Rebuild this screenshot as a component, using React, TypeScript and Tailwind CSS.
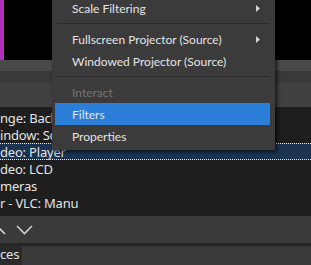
const rows = [
  { label: 'nge: Background' },
  { label: 'indow: Screen' },
  { label: 'deo: Player', selected: true },
  { label: 'deo: LCD' },
  { label: 'meras' },
  { label: 'r - VLC: Manu' },
]

function Arrow() {
  return (
    <svg width="4" height="7" viewBox="0 0 4 7" className="ml-auto">
      <path d="M0 0 L4 3.5 L0 7 Z" fill="#d4d4d4" />
    </svg>
  )
}

function Chevron({ up }: { up?: boolean }) {
  return (
    <svg width="17" height="10" viewBox="0 0 17 10" className="shrink-0">
      <polyline
        points={up ? '1,9 8.5,1.5 16,9' : '1,1 8.5,8.5 16,1'}
        fill="none"
        stroke="#cfcfcf"
        strokeWidth="1.6"
      />
    </svg>
  )
}

function Item({ label, arrow, disabled, active }: { label: string; arrow?: boolean; disabled?: boolean; active?: boolean }) {
  return (
    <div
      className={`flex items-center h-[22px] ml-[3px] mr-[5px] pl-[17px] pr-[10px] pt-px ${
        active ? 'bg-[#2b7fd9]' : ''
      } ${disabled ? 'text-[#747474]' : 'text-[#e4e4e4]'}`}
    >
      <span>{label}</span>
      {arrow && <Arrow />}
    </div>
  )
}

function Separator() {
  return (
    <div className="h-[9px] flex items-center px-[5px]">
      <div className="h-px w-full bg-[#2a2a2a]" />
    </div>
  )
}

export default function App() {
  return (
    <div className="relative w-[311px] h-[265px] overflow-hidden bg-[#1e1e1e] font-['Noto_Sans',sans-serif]">
      {/* preview */}
      <div className="flex h-[60px] bg-black">
        <div className="w-[4px] bg-[#b22fbd]" />
      </div>
      <div className="h-[11px] bg-[#4a4a4a]" />
      <div className="h-[12px] bg-[#393939]" />
      <div className="h-[24px] bg-[#414141]" />

      {/* sources list */}
      <div className="h-[109px] overflow-hidden pt-[2px] text-[13px] tracking-[-0.2px] text-[#e2e2e2]">
        {rows.map(r => (
          <div
            key={r.label}
            className={`h-[17px] leading-[17px] whitespace-nowrap border-y ${
              r.selected ? 'bg-[#1b3452] border-dotted border-[#e8e8e8]' : 'border-transparent'
            }`}
          >
            {r.label}
          </div>
        ))}
      </div>

      {/* toolbar */}
      <div className="flex items-center h-[27px] bg-[#3a3a3a] -ml-[11px] gap-[10px] pt-px">
        <Chevron up />
        <Chevron />
      </div>
      <div className="h-[3px] bg-[#262626]" />
      <div className="flex h-[19px] bg-[#3a3a3a]">
        <div className="w-[22px] bg-[#2a2a2a] rounded-tr-[3px] text-[13px] tracking-[-0.2px] text-[#e2e2e2] leading-[17px] overflow-hidden whitespace-nowrap">
          ces
        </div>
      </div>

      {/* context menu */}
      <div className="absolute left-[52px] top-[-3px] w-[223px] bg-[#3b3b3b] pb-[3px] font-['Lato',sans-serif] text-[12px] shadow-[2px_2px_4px_rgba(0,0,0,0.7)]">
        <Item label="Scale Filtering" arrow />
        <Separator />
        <Item label="Fullscreen Projector (Source)" arrow />
        <Item label="Windowed Projector (Source)" />
        <Separator />
        <Item label="Interact" disabled />
        <Item label="Filters" active />
        <Item label="Properties" />
      </div>
    </div>
  )
}
